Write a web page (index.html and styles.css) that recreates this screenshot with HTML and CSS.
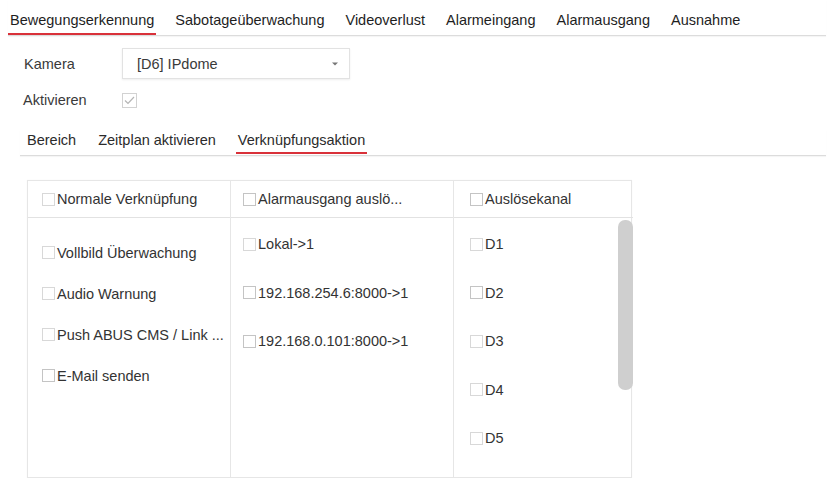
FILE: index.html
```html
<!DOCTYPE html>
<html lang="de">
<head>
<meta charset="utf-8">
<title>Bewegungserkennung</title>
<link rel="stylesheet" href="styles.css">
</head>
<body>
<nav class="tabs">
  <span class="tab active">Bewegungserkennung</span>
  <span class="tab">Sabotageüberwachung</span>
  <span class="tab">Videoverlust</span>
  <span class="tab">Alarmeingang</span>
  <span class="tab">Alarmausgang</span>
  <span class="tab">Ausnahme</span>
</nav>

<section class="form">
  <div class="row row-camera">
    <span class="label">Kamera</span>
    <div class="select">
      <span class="select-text">[D6] IPdome</span>
      <svg class="caret" width="6" height="4" viewBox="0 0 6 4"><path d="M0 0.5h6L3 3.5z" fill="#777"/></svg>
    </div>
  </div>
  <div class="row row-enable">
    <span class="label">Aktivieren</span>
    <span class="check check-on">
      <svg width="11" height="9" viewBox="0 0 11 9"><path d="M1 4.5l3 3L10 1" fill="none" stroke="#b5b5b5" stroke-width="1.2"/></svg>
    </span>
  </div>
</section>

<nav class="subtabs">
  <span class="subtab">Bereich</span>
  <span class="subtab">Zeitplan aktivieren</span>
  <span class="subtab active">Verknüpfungsaktion</span>
</nav>

<div class="grid">
  <div class="col col-1">
    <div class="head"><span class="box light"></span>Normale Verknüpfung</div>
    <div class="body body-1">
      <div class="item"><span class="box light"></span>Vollbild Überwachung</div>
      <div class="item"><span class="box light"></span>Audio Warnung</div>
      <div class="item"><span class="box light"></span>Push ABUS CMS / Link ...</div>
      <div class="item"><span class="box"></span>E-Mail senden</div>
    </div>
  </div>
  <div class="col col-2">
    <div class="head"><span class="box"></span>Alarmausgang auslö...</div>
    <div class="body body-2">
      <div class="item"><span class="box light"></span>Lokal-&gt;1</div>
      <div class="item"><span class="box"></span>192.168.254.6:8000-&gt;1</div>
      <div class="item"><span class="box"></span>192.168.0.101:8000-&gt;1</div>
    </div>
  </div>
  <div class="col col-3">
    <div class="head"><span class="box"></span>Auslösekanal</div>
    <div class="body body-3">
      <div class="item"><span class="box light"></span>D1</div>
      <div class="item"><span class="box"></span>D2</div>
      <div class="item"><span class="box light"></span>D3</div>
      <div class="item"><span class="box light"></span>D4</div>
      <div class="item"><span class="box light"></span>D5</div>
      <span class="thumb"></span>
    </div>
  </div>
</div>
</body>
</html>
```

FILE: styles.css
```css
* { box-sizing: border-box; }

body {
  margin: 0;
  background: #ffffff;
  font-family: "Liberation Sans", Arial, sans-serif;
  font-size: 14.5px;
  color: #2b2b2b;
}

.tabs {
  display: flex;
  gap: 17px;
  height: 36px;
  margin: 0 3px 0 8px;
  border-bottom: 1px solid #dcdcdc;
  box-shadow: 0 1px 1px rgba(0,0,0,0.04);
}

.tab {
  height: 35px;
  padding: 0 2px;
  display: flex;
  align-items: center;
  padding-top: 6px;
  border-bottom: 2px solid transparent;
  color: #1e1e1e;
  white-space: nowrap;
}

.tab.active { border-bottom-color: #d9313a; }

.form {
  margin-top: 12px;
  padding-left: 24px;
}

.row {
  display: flex;
  align-items: center;
}

.label {
  width: 98px;
  color: #3a3a3a;
}

.row-camera { height: 31px; }
.row-enable { height: 22px; margin-top: 10px; }
.row-enable .label { margin-left: -1px; width: 99px; }

.select {
  width: 228px;
  height: 31px;
  border: 1px solid #e2e2e2;
  box-shadow: 0 1px 2px rgba(0,0,0,0.07);
  display: flex;
  align-items: center;
  justify-content: space-between;
  padding: 0 11px 0 14px;
  color: #3a3a3a;
}

.caret { display: block; }

.check {
  width: 15px;
  height: 15px;
  border: 1px solid #d2d2d2;
  display: flex;
  align-items: center;
  justify-content: center;
}

.subtabs {
  display: flex;
  gap: 18px;
  margin: 19px 3px 0 20px;
  padding-left: 5px;
  height: 26px;
  border-bottom: 1px solid #dcdcdc;
  box-shadow: 0 1px 1px rgba(0,0,0,0.04);
}

.subtab {
  height: 24px;
  padding: 0 2px 2px;
  display: flex;
  align-items: center;
  border-bottom: 2px solid transparent;
  color: #2b2b2b;
  white-space: nowrap;
}

.subtab.active { border-bottom-color: #d9313a; }

.grid {
  display: grid;
  grid-template-columns: 203px 223px 179px;
  width: 605px;
  height: 298px;
  margin: 24px 0 0 27px;
  border: 1px solid #e6e6e6;
  box-shadow: 0 0 1px rgba(0,0,0,0.05);
}

.col {
  display: flex;
  flex-direction: column;
  min-height: 0;
}

.col-1, .col-2 { border-right: 1px solid #e6e6e6; }

.head {
  height: 37px;
  flex: none;
  display: flex;
  align-items: center;
  border-bottom: 1px solid #e2e2e2;
  color: #333;
  white-space: nowrap;
}

.col-1 .head { padding-left: 14px; }
.col-2 .head { padding-left: 12px; }
.col-3 .head { padding-left: 16px; }

.body {
  flex: 1;
  min-height: 0;
  display: flex;
  flex-direction: column;
  overflow: hidden;
  position: relative;
}

.item {
  display: flex;
  align-items: center;
  flex: none;
  color: #333;
  white-space: nowrap;
}

.body-1 { padding: 14px 0 0 14px; }
.body-1 .item { height: 41px; }

.body-2 { padding: 2px 0 0 12px; }
.body-2 .item { height: 48.5px; }

.body-3 { padding: 2px 0 0 16px; }
.body-3 .item { height: 48.5px; }

.box {
  width: 13px;
  height: 13px;
  margin-right: 2px;
  border: 1px solid #c4c4c4;
  flex: none;
}

.box.light { border-color: #d8d8d8; }

.thumb {
  position: absolute;
  right: 0;
  top: 2px;
  width: 15px;
  height: 170px;
  border-radius: 7px;
  background: #cfcfcf;
}
```
